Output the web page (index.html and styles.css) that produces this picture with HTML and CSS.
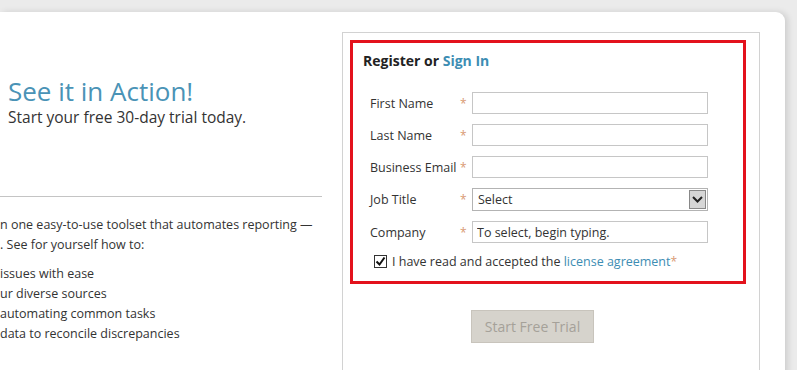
FILE: index.html
```html
<!DOCTYPE html>
<html lang="en">
<head>
    <meta charset="UTF-8">
    <title>Start Free Trial</title>
    <link rel="stylesheet" href="styles.css">
</head>
<body>
    <div class="page">
        <div class="card">
            <div class="intro">
                <div class="hero">
                    <h1>See it in Action!</h1>
                    <p class="sub">Start your free 30-day trial today.</p>
                </div>
                <hr class="divider">
                <div class="copy">
                    <p>n one easy-to-use toolset that automates reporting &mdash;<br>. See for yourself how to:</p>
                    <ul>
                        <li>issues with ease</li>
                        <li>ur diverse sources</li>
                        <li>automating common tasks</li>
                        <li>data to reconcile discrepancies</li>
                    </ul>
                </div>
            </div>

            <div class="panel">
                <form class="register">
                    <h2>Register or <a href="#">Sign In</a></h2>
                    <div class="fields">
                        <label>First Name</label><span class="req">*</span>
                        <input type="text">
                        <label>Last Name</label><span class="req">*</span>
                        <input type="text">
                        <label>Business Email</label><span class="req">*</span>
                        <input type="text">
                        <label>Job Title</label><span class="req">*</span>
                        <div class="select">
                            <span>Select</span>
                            <span class="arrow">
                                <svg width="11" height="7" viewBox="0 0 11 7"><path d="M1 1 L5.5 5.5 L10 1" fill="none" stroke="#222" stroke-width="2"/></svg>
                            </span>
                        </div>
                        <label>Company</label><span class="req">*</span>
                        <input type="text" value="To select, begin typing.">
                    </div>
                    <div class="agree">
                        <span class="check">
                            <svg width="11" height="11" viewBox="0 0 11 11"><path d="M1.5 5.5 L4.5 8.5 L9.5 1.5" fill="none" stroke="#111" stroke-width="2"/></svg>
                        </span>
                        <span>I have read and accepted the <a href="#">license agreement</a><span class="req">*</span></span>
                    </div>
                </form>
                <div class="actions">
                    <button type="button" class="start-btn">Start Free Trial</button>
                </div>
            </div>
        </div>
    </div>
</body>
</html>
```

FILE: styles.css
```css
body {
    margin: 0;
    background: #ebebeb;
    font-family: "Open Sans", "DejaVu Sans", sans-serif;
    color: #333;
    overflow: hidden;
}
.page {
    padding: 12px 12px 0 0;
    height: 358px;
    overflow: hidden;
}
.card {
    background: white;
    border-radius: 0 9px 0 0;
    box-shadow: 3px 0 6px rgba(0,0,0,0.12);
    height: 400px;
    width: 785px;
    display: grid;
    grid-template-columns: 322px 418px;
    column-gap: 20px;
    padding-top: 20px;
    box-sizing: border-box;
}
.intro {
    overflow: hidden;
}
.hero {
    padding: 43px 0 0 8px;
    height: 121px;
}
h1 {
    margin: 0;
    font-size: 26px;
    font-weight: normal;
    line-height: 32px;
    color: #4a93b6;
}
.sub {
    margin: 0;
    font-size: 15.5px;
    line-height: 20px;
}
.divider {
    border: none;
    border-top: 1px solid #c4c4c4;
    margin: 0;
}
.copy {
    font-size: 12.5px;
    line-height: 20px;
    white-space: nowrap;
}
.copy p {
    margin: 18px 0 0 0;
}
.copy ul {
    list-style: none;
    padding: 0;
    margin: 9px 0 0 0;
}
.panel {
    border: 1px solid #d2d2d2;
    border-bottom: none;
    padding: 7px 0 0 7px;
}
.register {
    width: 396px;
    box-sizing: border-box;
    border: 3px solid #e3121c;
    padding: 8px 10px 11px 10px;
    font-size: 12.5px;
}
h2 {
    margin: 0 0 22px 0;
    font-size: 14px;
    font-weight: bold;
    color: #222;
}
h2 a, .agree a {
    color: #3d8db3;
    text-decoration: none;
}
.fields {
    display: grid;
    grid-template-columns: 90px 12px 236px;
    row-gap: 10px;
    align-items: center;
    padding-left: 7px;
}
.fields label {
    white-space: nowrap;
}
.req {
    color: #d99a73;
    font-size: 12px;
}
.fields input {
    height: 22px;
    box-sizing: border-box;
    border: 1px solid #c6c6c6;
    padding: 0 4px;
    font-family: inherit;
    font-size: 12.5px;
    color: #333;
}
.select {
    height: 23px;
    box-sizing: border-box;
    border: 1px solid #b3b3b3;
    display: flex;
    align-items: center;
    justify-content: space-between;
    padding: 0 1px 0 5px;
}
.arrow {
    width: 17px;
    height: 19px;
    box-sizing: border-box;
    border: 1px solid #888;
    background: #d6d6d6;
    display: flex;
    align-items: center;
    justify-content: center;
}
.agree {
    display: flex;
    align-items: center;
    gap: 5px;
    margin: 10px 0 0 11px;
    white-space: nowrap;
}
.check {
    width: 13px;
    height: 13px;
    box-sizing: border-box;
    border: 1px solid #333;
    display: flex;
    align-items: center;
    justify-content: center;
}
.actions {
    padding: 26px 0 0 121px;
}
.start-btn {
    width: 123px;
    height: 33px;
    background: #d6d3cc;
    border: 1px solid #c8c4bc;
    color: #a5a199;
    font-family: inherit;
    font-size: 14px;
}
```
